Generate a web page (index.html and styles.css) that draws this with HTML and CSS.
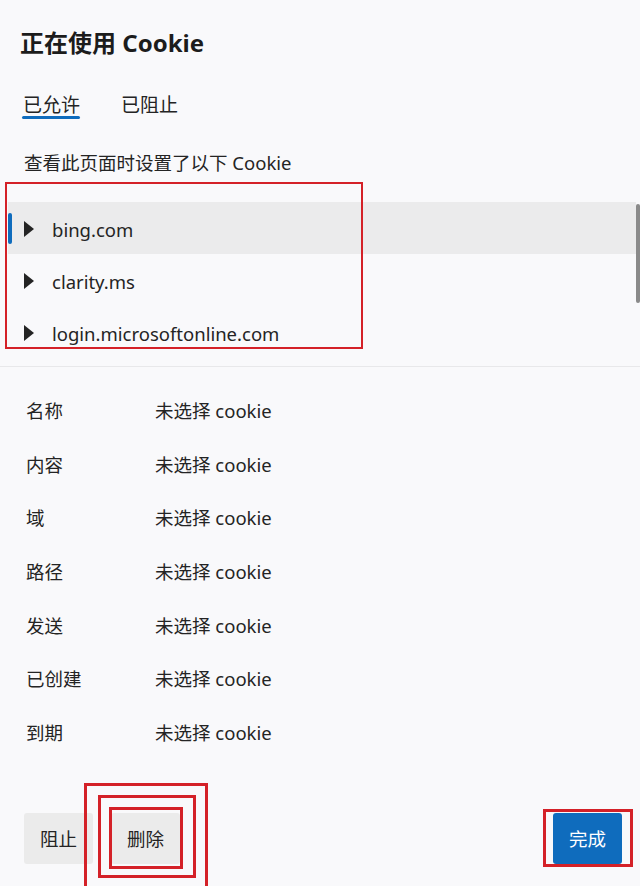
FILE: index.html
```html
<!DOCTYPE html>
<html lang="zh-CN">
<head>
<meta charset="utf-8">
<title>正在使用 Cookie</title>
<link rel="stylesheet" href="styles.css">
</head>
<body>
<div class="dialog">
  <h1 class="title">正在使用 Cookie</h1>
  <div class="tabs">
    <div class="tab active">已允许</div>
    <div class="tab">已阻止</div>
  </div>
  <p class="subtitle">查看此页面时设置了以下 Cookie</p>
  <div class="sites">
    <div class="site selected"><span class="caret"></span><span class="site-name">bing.com</span></div>
    <div class="site"><span class="caret"></span><span class="site-name">clarity.ms</span></div>
    <div class="site"><span class="caret"></span><span class="site-name">login.microsoftonline.com</span></div>
    <div class="scrollbar"></div>
  </div>
  <div class="details">
    <div class="label">名称</div><div class="value">未选择 cookie</div>
    <div class="label">内容</div><div class="value">未选择 cookie</div>
    <div class="label">域</div><div class="value">未选择 cookie</div>
    <div class="label">路径</div><div class="value">未选择 cookie</div>
    <div class="label">发送</div><div class="value">未选择 cookie</div>
    <div class="label">已创建</div><div class="value">未选择 cookie</div>
    <div class="label">到期</div><div class="value">未选择 cookie</div>
  </div>
  <div class="footer">
    <div class="left-buttons">
      <button class="btn">阻止</button>
      <button class="btn">删除</button>
    </div>
    <button class="btn primary">完成</button>
  </div>
  <div class="mark mark-list"></div>
  <div class="mark mark-del-outer"></div>
  <div class="mark mark-del-mid"></div>
  <div class="mark mark-del-inner"></div>
  <div class="mark mark-done"></div>
</div>
</body>
</html>
```
FILE: styles.css
```css
html, body {
  margin: 0;
  padding: 0;
  background: #f9f9fb;
}
body {
  font-family: "Noto Sans", "Noto Sans CJK SC", sans-serif;
  color: #242424;
  width: 640px;
  height: 886px;
  overflow: hidden;
}
.dialog {
  position: relative;
  display: flex;
  flex-direction: column;
  height: 886px;
}
.title {
  margin: 0;
  padding: 26px 0 0 20px;
  font-size: 24px;
  line-height: 34px;
  font-weight: 700;
  color: #1c1c1c;
}
.tabs {
  display: flex;
  gap: 40px;
  margin-top: 34px;
  padding-left: 22px;
}
.tab {
  font-size: 19px;
  line-height: 22px;
  padding-left: 1px;
}
.tab.active::after {
  content: "";
  display: block;
  height: 3px;
  margin-left: -1px;
  border-radius: 2px;
  background: #0f6cbd;
}
.tab:not(.active)::after {
  content: "";
  display: block;
  height: 3px;
}
.subtitle {
  margin: 31px 0 0 24px;
  font-size: 18.5px;
  line-height: 26px;
}
.sites {
  position: relative;
  margin-top: 14px;
  height: 160px;
  overflow: hidden;
  padding-top: 12px;
  box-sizing: border-box;
}
.site {
  position: relative;
  display: flex;
  align-items: center;
  height: 52px;
  margin: 0 4px 0 8px;
  padding-left: 16px;
  gap: 18px;
  font-size: 18.5px;
}
.site.selected {
  background: #ebebec;
}
.site.selected::before {
  content: "";
  position: absolute;
  left: 0;
  top: 11px;
  width: 4px;
  height: 31px;
  border-radius: 2px;
  background: #0f6cbd;
}
.caret {
  width: 0;
  height: 0;
  margin-top: 2px;
  border-top: 8px solid transparent;
  border-bottom: 8px solid transparent;
  border-left: 10px solid #242424;
}
.site-name {
  line-height: 24px;
  padding-top: 4px;
}
.scrollbar {
  position: absolute;
  right: 0;
  top: 14px;
  width: 4px;
  height: 99px;
  border-radius: 2px;
  background: #8a8a8a;
}
.details {
  margin-top: 16px;
  border-top: 1px solid #e8e8ea;
  padding: 16px 0 0 26px;
  display: grid;
  grid-template-columns: 129px 1fr;
  grid-auto-rows: 53.7px;
  align-items: center;
  font-size: 18.5px;
}
.footer {
  display: flex;
  justify-content: space-between;
  align-items: center;
  margin-top: 54px;
  padding: 0 18px 0 24px;
}
.left-buttons {
  display: flex;
  gap: 18px;
}
.btn {
  font-family: "Noto Sans", "Noto Sans CJK SC", sans-serif;
  font-size: 18.5px;
  color: #242424;
  background: #ebebeb;
  border: none;
  border-radius: 3px;
  width: 69px;
  height: 51px;
  padding: 0;
}
.btn.primary {
  background: #0f6cbd;
  color: #ffffff;
}
.mark {
  position: absolute;
  border: 3px solid #d42128;
  box-sizing: border-box;
}
.mark-list {
  left: 5px;
  top: 182px;
  width: 358px;
  height: 167px;
  border-width: 2px;
}
.mark-del-outer {
  left: 84px;
  top: 783px;
  width: 124px;
  height: 120px;
}
.mark-del-mid {
  left: 98px;
  top: 795px;
  width: 98px;
  height: 83px;
}
.mark-del-inner {
  left: 109px;
  top: 807px;
  width: 74px;
  height: 62px;
}
.mark-done {
  left: 543px;
  top: 809px;
  width: 90px;
  height: 58px;
}
```
